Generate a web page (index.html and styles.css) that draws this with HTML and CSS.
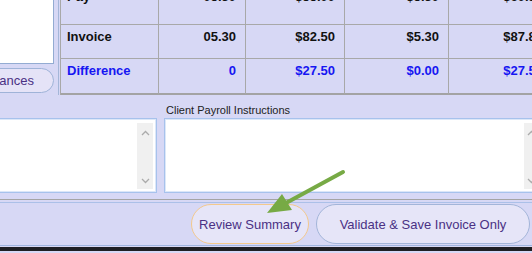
FILE: index.html
```html
<!DOCTYPE html>
<html lang="en">
<head>
    <meta charset="UTF-8">
    <meta name="viewport" content="width=device-width, initial-scale=1.0">
    <title>Invoice Review</title>
    <link rel="stylesheet" href="styles.css">
</head>
<body>
    <!-- Totals area -->
    <div class="summary">
        <div class="side">
            <div class="side-box"></div>
            <button class="side-button">Variances</button>
        </div>
        <div class="grid">
            <div class="cell label">Pay</div>
            <div class="cell">05.30</div>
            <div class="cell">$55.00</div>
            <div class="cell">$5.30</div>
            <div class="cell">$60.30</div>

            <div class="cell label">Invoice</div>
            <div class="cell">05.30</div>
            <div class="cell">$82.50</div>
            <div class="cell">$5.30</div>
            <div class="cell">$87.80</div>

            <div class="cell label diff">Difference</div>
            <div class="cell diff">0</div>
            <div class="cell diff">$27.50</div>
            <div class="cell diff">$0.00</div>
            <div class="cell diff">$27.50</div>
        </div>
    </div>

    <!-- Instructions -->
    <div class="notes">
        <div class="notes-col notes-left">
            <div class="notes-label"></div>
            <div class="memo">
                <div class="scrollbar">
                    <svg width="9" height="6" viewBox="0 0 9 6"><polyline points="1,5 4.5,1.5 8,5" fill="none" stroke="#ababab" stroke-width="1.3"/></svg>
                    <svg width="9" height="6" viewBox="0 0 9 6"><polyline points="1,1 4.5,4.5 8,1" fill="none" stroke="#ababab" stroke-width="1.3"/></svg>
                </div>
            </div>
        </div>
        <div class="notes-col notes-right">
            <div class="notes-label">Client Payroll Instructions</div>
            <div class="memo">
                <div class="scrollbar">
                    <svg width="9" height="6" viewBox="0 0 9 6"><polyline points="1,5 4.5,1.5 8,5" fill="none" stroke="#ababab" stroke-width="1.3"/></svg>
                    <svg width="9" height="6" viewBox="0 0 9 6"><polyline points="1,1 4.5,4.5 8,1" fill="none" stroke="#ababab" stroke-width="1.3"/></svg>
                </div>
            </div>
        </div>
    </div>

    <!-- Buttons -->
    <div class="footer">
        <button class="pill pill-review">Review Summary</button>
        <button class="pill pill-save">Validate &amp; Save Invoice Only</button>
    </div>
    <div class="statusbar"></div>

    <!-- annotation arrow -->
    <svg class="pointer" width="90" height="52" viewBox="0 0 90 52">
        <line x1="81" y1="4" x2="24" y2="35" stroke="#77aa45" stroke-width="4" stroke-linecap="round"/>
        <polygon points="5,45 30,42 20,26" fill="#77aa45"/>
    </svg>
</body>
</html>
```

FILE: styles.css
```css
body {
    font-family: "Liberation Sans", Arial, sans-serif;
    background-color: #d7d8f5;
    margin: 0;
    padding: 0;
    width: 532px;
    height: 253px;
    overflow: hidden;
    position: relative;
}

/* top: totals */
.summary {
    display: flex;
    height: 95px;
    overflow: hidden;
}

.side {
    width: 58px;
    flex-shrink: 0;
    border-right: 1px solid #a4b6d8;
}

.side-box {
    width: 64px;
    height: 66px;
    margin: -2px 0 0 -10px;
    box-sizing: border-box;
    background-color: white;
    border: 1px solid #93abd2;
}

.side-button {
    display: flex;
    justify-content: flex-end;
    align-items: center;
    width: 80px;
    height: 25px;
    margin: 4px 0 0 -26px;
    padding: 0 19px 0 0;
    box-sizing: border-box;
    background-color: #e5e3f7;
    border: 1px solid #9fb3d8;
    border-radius: 13px;
    color: #4a3184;
    font-family: "Liberation Sans", Arial, sans-serif;
    font-size: 13px;
}

.grid {
    display: grid;
    grid-template-columns: 98px 87px 99px 104px 104px;
    grid-template-rows: 40px 34px 36px;
    margin: -15px 0 0 1px;
    border-left: 1px solid #a8a8a8;
    align-self: flex-start;
    flex-shrink: 0;
}

.cell {
    box-sizing: border-box;
    border-right: 1px solid #a8a8a8;
    border-bottom: 1px solid #a8a8a8;
    padding: 4px 9px 0 6px;
    line-height: 16px;
    font-size: 13px;
    font-weight: bold;
    color: #111;
    text-align: right;
    white-space: nowrap;
}

.cell.label {
    text-align: left;
}

.cell.diff {
    color: #1616f2;
    border-bottom: 2px solid #a3a3a3;
}

/* middle: instructions */
.notes {
    display: flex;
    gap: 7px;
    height: 105px;
    margin-left: -20px;
    box-sizing: border-box;
    border-bottom: 1px solid #a4a4a4;
}

.notes-col {
    display: flex;
    flex-direction: column;
    flex-shrink: 0;
}

.notes-left {
    width: 177px;
}

.notes-right {
    width: 381px;
}

.notes-label {
    height: 23px;
    padding: 9px 0 0 2px;
    box-sizing: border-box;
    font-size: 11px;
    line-height: 13px;
    color: #222;
}

.memo {
    height: 75px;
    box-sizing: border-box;
    background-color: white;
    border: 1px solid #a7c2ec;
    box-shadow: inset 0 0 0 1px #dce7f8;
    padding: 4px 3px 3px 0;
    display: flex;
    justify-content: flex-end;
}

.notes-right .memo {
    padding-right: 0;
}

.scrollbar {
    width: 16px;
    background-color: #f0f0f0;
    display: flex;
    flex-direction: column;
    justify-content: space-between;
    align-items: center;
    padding: 7px 0 5px;
}

.notes-right .scrollbar {
    width: 20px;
    align-items: flex-start;
    padding-left: 3px;
    box-sizing: border-box;
}

/* bottom: actions */
.footer {
    display: flex;
    justify-content: flex-end;
    gap: 7px;
    height: 44px;
    margin-top: 2px;
    padding: 1px 2px 0 0;
    box-sizing: border-box;
    border-top: 1px solid #abc0e8;
    border-bottom: 1px solid #a0b5df;
}

.pill {
    height: 40px;
    border-radius: 20px;
    background-color: #e6e5f8;
    border: 1px solid #a3b5d9;
    color: #4a3184;
    font-family: "Liberation Sans", Arial, sans-serif;
    font-size: 13px;
    padding: 0;
    box-sizing: border-box;
}

.pill-review {
    width: 118px;
    border-color: #f4c98c;
}

.pill-save {
    width: 214px;
}

.statusbar {
    height: 4px;
    margin-top: 1px;
    background-color: #1f1f24;
}

/* arrow drawn over the screenshot */
.pointer {
    position: absolute;
    left: 262px;
    top: 168px;
    pointer-events: none;
}
```
